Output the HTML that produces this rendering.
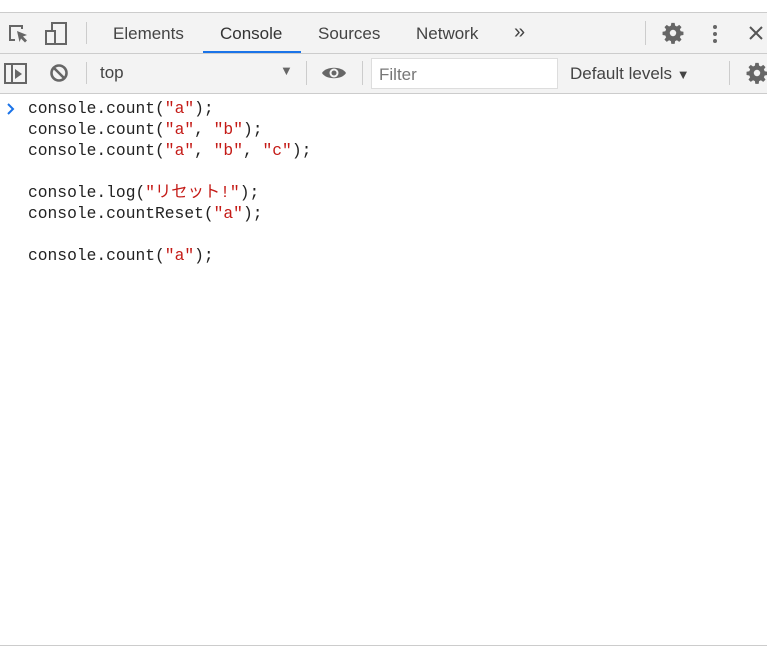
<!DOCTYPE html>
<html><head><meta charset="utf-8"><style>
body{margin:0;width:767px;height:647px;background:#fff;font-family:"Liberation Sans",sans-serif;position:relative;overflow:hidden}
.bar1{position:absolute;top:12px;left:0;width:767px;height:40px;background:#f3f3f3;border-top:1px solid #ccc;border-bottom:1px solid #ccc}
.bar2{position:absolute;top:54px;left:0;width:767px;height:39px;background:#f3f3f3;border-bottom:1px solid #ccc}
.t{position:absolute;font-size:17px;color:#444;top:11px}
.sep{position:absolute;width:1px;background:#ccc}
.code{position:absolute;left:28px;top:98px;font-family:"Liberation Mono","Noto Sans CJK JP",monospace;font-size:16.3px;line-height:21px;color:#222;white-space:pre}
.s{color:#c41a16}
</style></head><body>
<svg width="0" height="0" style="position:absolute"><defs><g id="gear"><path d="M10.2 1h3.6l.5 3 2 .9 2.5-1.8 2.5 2.5-1.8 2.5.9 2 3 .5v3.6l-3 .5-.9 2 1.8 2.5-2.5 2.5-2.5-1.8-2 .9-.5 3h-3.6l-.5-3-2-.9-2.5 1.8-2.5-2.5 1.8-2.5-.9-2-3-.5v-3.6l3-.5.9-2-1.8-2.5 2.5-2.5 2.5 1.8 2-.9z" fill="#666"/><circle cx="12" cy="12" r="3.5" fill="#f3f3f3"/></g></defs></svg>
<div class="bar1">
<svg style="position:absolute;left:6px;top:9px" width="24" height="24" viewBox="0 0 24 24"><path d="M3 3h14v4h-2V5H5v12h4v2H3z" fill="#666"/><path d="M11 9l10 4-4 1.5 4 4-2 2-4-4L13.5 20z" fill="#666"/></svg>
<svg style="position:absolute;left:44px;top:8px" width="24" height="26" viewBox="0 0 24 26"><rect x="8" y="2" width="14" height="21" fill="none" stroke="#666" stroke-width="2"/><rect x="2" y="10" width="9" height="13" fill="#f3f3f3" stroke="#666" stroke-width="2"/></svg>
<div class="sep" style="left:86px;top:9px;height:22px"></div>
<span class="t" style="left:113px">Elements</span>
<span class="t" style="left:220px;color:#333">Console</span>
<div style="position:absolute;left:203px;top:38px;width:98px;height:2px;background:#1a73e8"></div>
<span class="t" style="left:318px">Sources</span>
<span class="t" style="left:416px">Network</span>
<span class="t" style="left:514px;top:8px;font-size:20px">»</span>
<div class="sep" style="left:645px;top:8px;height:24px"></div>
<svg style="position:absolute;left:662px;top:9px" width="22" height="22" viewBox="0 0 24 24"><use href="#gear"/></svg>
<svg style="position:absolute;left:712px;top:11px" width="6" height="20"><circle cx="3" cy="3" r="2" fill="#666"/><circle cx="3" cy="10" r="2" fill="#666"/><circle cx="3" cy="17" r="2" fill="#666"/></svg>
<svg style="position:absolute;left:748px;top:12px" width="16" height="16"><path d="M2 2L14 14M14 2L2 14" stroke="#555" stroke-width="2"/></svg>
</div>
<div class="bar2">
<svg style="position:absolute;left:4px;top:9px" width="24" height="22"><rect x="1" y="1" width="21" height="19" fill="none" stroke="#666" stroke-width="2"/><path d="M8 2v18" stroke="#666" stroke-width="2"/><path d="M11 6l7 5-7 5z" fill="#666"/></svg>
<svg style="position:absolute;left:49px;top:9px" width="20" height="20"><circle cx="10" cy="10" r="7.5" fill="none" stroke="#666" stroke-width="2.6"/><path d="M5 5L15 15" stroke="#666" stroke-width="2.6"/></svg>
<div class="sep" style="left:86px;top:8px;height:22px"></div>
<span class="t" style="left:100px;top:9px">top</span>
<span class="t" style="left:280px;top:9px;font-size:13px;color:#666">▼</span>
<div class="sep" style="left:306px;top:7px;height:24px"></div>
<svg style="position:absolute;left:321px;top:10px" width="26" height="18"><path d="M1 9C5 2 21 2 25 9C21 16 5 16 1 9Z" fill="#666"/><circle cx="13" cy="9" r="4.5" fill="#f3f3f3"/><circle cx="13" cy="9" r="2.5" fill="#666"/></svg>
<div class="sep" style="left:362px;top:7px;height:24px"></div>
<div style="position:absolute;left:371px;top:4px;width:185px;height:29px;background:#fff;border:1px solid #ddd"></div>
<span class="t" style="left:379px;top:11px;color:#777">Filter</span>
<span class="t" style="left:570px;top:10px">Default levels <span style="font-size:13px">▼</span></span>
<div class="sep" style="left:729px;top:7px;height:24px"></div>
<svg style="position:absolute;left:746px;top:8px" width="22" height="22" viewBox="0 0 24 24"><use href="#gear"/></svg>
</div>
<svg style="position:absolute;left:6px;top:103px" width="10" height="12"><path d="M2 1l5 5-5 5" fill="none" stroke="#1a73e8" stroke-width="2"/></svg>
<div class="code">console.count(<span class="s">"a"</span>);
console.count(<span class="s">"a"</span>, <span class="s">"b"</span>);
console.count(<span class="s">"a"</span>, <span class="s">"b"</span>, <span class="s">"c"</span>);

console.log(<span class="s">"リセット!"</span>);
console.countReset(<span class="s">"a"</span>);

console.count(<span class="s">"a"</span>);</div>
<div style="position:absolute;left:0;top:645px;width:767px;height:1px;background:#ccc"></div>
</body></html>
